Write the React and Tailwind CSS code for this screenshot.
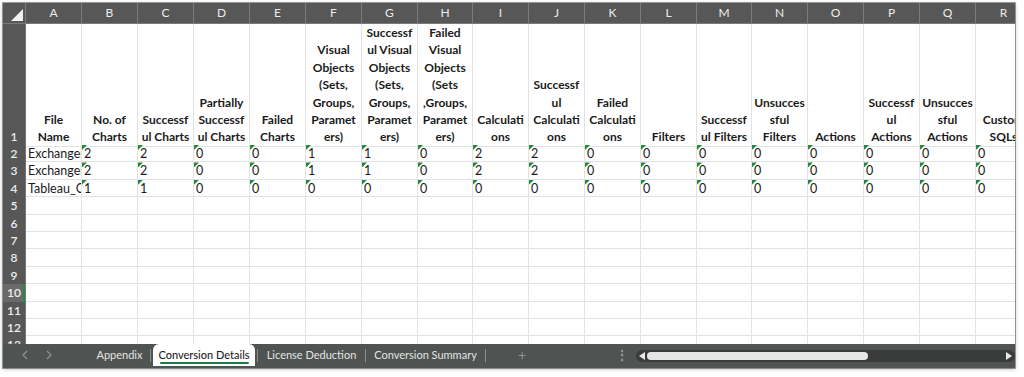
import React from "react";

const COLS = "grid grid-cols-[23px_repeat(7,56px)_55px_repeat(4,56px)_55px_repeat(5,56px)]";
const LETTERS = ["A", "B", "C", "D", "E", "F", "G", "H", "I", "J", "K", "L", "M", "N", "O", "P", "Q", "R"];

const HEADERS = [
  ["File", "Name"],
  ["No. of", "Charts"],
  ["Successf", "ul Charts"],
  ["Partially", "Successf", "ul Charts"],
  ["Failed", "Charts"],
  ["Visual", "Objects", "(Sets,", "Groups,", "Paramet", "ers)"],
  ["Successf", "ul Visual", "Objects", "(Sets,", "Groups,", "Paramet", "ers)"],
  ["Failed", "Visual", "Objects", "(Sets", ",Groups,", "Paramet", "ers)"],
  ["Calculati", "ons"],
  ["Successf", "ul", "Calculati", "ons"],
  ["Failed", "Calculati", "ons"],
  ["Filters"],
  ["Successf", "ul Filters"],
  ["Unsucces", "sful", "Filters"],
  ["Actions"],
  ["Successf", "ul", "Actions"],
  ["Unsucces", "sful", "Actions"],
  ["Custom", "SQLs"],
];

const DATA = [
  ["ExchangeRates.twb", 2, 2, 0, 0, 1, 1, 0, 2, 2, 0, 0, 0, 0, 0, 0, 0, 0],
  ["ExchangeRates_v2.twb", 2, 2, 0, 0, 1, 1, 0, 2, 2, 0, 0, 0, 0, 0, 0, 0, 0],
  ["Tableau_Charts.twb", 1, 1, 0, 0, 0, 0, 0, 0, 0, 0, 0, 0, 0, 0, 0, 0, 0],
];

const EMPTY_ROWS = [5, 6, 7, 8, 9, 10, 11, 12, 13];

function RowHead({ n, active, tall }) {
  return (
    <div
      className={`relative flex justify-center border-b border-r border-[#747474] text-[12px] font-semibold text-[#ececec] ${
        tall ? "items-end leading-[17.4px]" : "items-center"
      } ${active ? "bg-[#6a6a6a]" : "bg-[#575757]"}`}
    >
      {n}
      {active && <span className="absolute right-0 top-0 h-full w-[2px] bg-[#1e8c45]" />}
    </div>
  );
}

function Cell({ value, flag }) {
  return (
    <div className="relative h-[17.4px] overflow-hidden whitespace-nowrap border-b border-r border-[#e2e2e2] pl-[2px] text-[12.5px] leading-[17px] text-[#1a1a1a]">
      {flag && (
        <span className="absolute left-0 top-0 h-[5px] w-[5px] bg-[#1f8a3a] [clip-path:polygon(0_0,100%_0,0_100%)]" />
      )}
      {value}
    </div>
  );
}

function Sheet() {
  return (
    <div className="h-[341px] overflow-hidden bg-white">
      {/* column letters */}
      <div className={`${COLS} h-[21px] bg-[#575757]`}>
        <div className="flex items-end justify-end border-b border-r border-[#7a7a7a] pb-[2px] pr-[2px]">
          <svg width="12" height="12" viewBox="0 0 12 12">
            <polygon points="12,0 12,12 0,12" fill="#f2f2f2" />
          </svg>
        </div>
        {LETTERS.map((l) => (
          <div
            key={l}
            className="flex items-center justify-center border-b border-r border-[#7a7a7a] text-[12px] text-[#ececec]"
          >
            {l}
          </div>
        ))}
      </div>

      {/* row 1 headings */}
      <div className={`${COLS} h-[121px]`}>
        <RowHead n={1} tall />
        {HEADERS.map((lines, i) => (
          <div
            key={i}
            className="flex flex-col items-center justify-end overflow-visible whitespace-nowrap border-b border-r border-[#e2e2e2] text-[12px] font-bold leading-[17.4px] text-[#1a1a1a]"
          >
            {lines.map((t, j) => (
              <span key={j}>{t}</span>
            ))}
          </div>
        ))}
      </div>

      {/* data rows */}
      {DATA.map((row, r) => (
        <div key={r} className={`${COLS} h-[17.4px]`}>
          <RowHead n={r + 2} />
          {row.map((v, c) => (
            <Cell key={c} value={v} flag={c > 0} />
          ))}
        </div>
      ))}

      {EMPTY_ROWS.map((n) => (
        <div key={n} className={`${COLS} h-[17.4px]`}>
          <RowHead n={n} active={n === 10} />
          {LETTERS.map((l) => (
            <Cell key={l} value="" />
          ))}
        </div>
      ))}
    </div>
  );
}

function Sep() {
  return <span className="h-[13px] w-px bg-[#8a8d8b]" />;
}

function Chevron({ left }) {
  return (
    <svg width="8" height="10" viewBox="0 0 8 10" fill="none" stroke="#8f9391" strokeWidth="1.2">
      <polyline points={left ? "6,1 2,5 6,9" : "2,1 6,5 2,9"} />
    </svg>
  );
}

function TabBar() {
  return (
    <div className="flex h-[24px] items-start bg-[#4f5351] text-[11px] text-[#e4e4e4]">
      <div className="flex h-[22px] w-[82px] items-center gap-[16px] pl-[18px]">
        <Chevron left />
        <Chevron />
      </div>
      <div className="flex h-[22px] w-[65px] items-center justify-center pl-[4px]">Appendix</div>
      <div className="flex h-[22px] items-center">
        <Sep />
      </div>
      <div className="ml-[2px] flex h-[22px] w-[102px] flex-col items-center justify-center rounded-t-[6px] bg-white font-medium text-[#1f1f1f]">
        <span className="pt-[1px] leading-[15px]">Conversion Details</span>
        <span className="h-[2px] w-[89px] rounded-full bg-[#1e7b41]" />
      </div>
      <div className="ml-[2px] flex h-[22px] items-center">
        <Sep />
      </div>
      <div className="flex h-[22px] w-[107px] items-center justify-center">License Deduction</div>
      <div className="flex h-[22px] items-center">
        <Sep />
      </div>
      <div className="flex h-[22px] w-[119px] items-center justify-center">Conversion Summary</div>
      <div className="flex h-[22px] items-center">
        <Sep />
      </div>
      <div className="flex h-[22px] w-[72px] items-center justify-center text-[15px] font-light text-[#b9bcba]">+</div>
      <div className="ml-[57px] flex h-[22px] w-[14px] items-center justify-center text-[12px] font-bold text-[#9ea19f]">⋮</div>
      <div className="ml-[7px] mt-[6px] flex h-[12px] flex-1 items-center rounded-full bg-[#3a3c3b] px-[3px]">
        <svg width="6" height="8" viewBox="0 0 6 8">
          <polygon points="6,0 6,8 0,4" fill="#e8e8e8" />
        </svg>
        <span className="ml-[2px] h-[8px] w-[221px] rounded-full bg-[#e6e6e6]" />
        <span className="flex-1" />
        <svg width="6" height="8" viewBox="0 0 6 8">
          <polygon points="0,0 0,8 6,4" fill="#e8e8e8" />
        </svg>
      </div>
    </div>
  );
}

export default function App() {
  return (
    <div className="h-[377px] w-[1024px] bg-white pl-[3px] pt-[3px] font-['Lato',sans-serif]">
      <div className="flex h-[365px] w-[1012px] flex-col overflow-hidden shadow-[0_0_0_1px_rgba(0,0,0,0.35),0_1px_4px_rgba(0,0,0,0.3)]">
        <Sheet />
        <TabBar />
      </div>
    </div>
  );
}
